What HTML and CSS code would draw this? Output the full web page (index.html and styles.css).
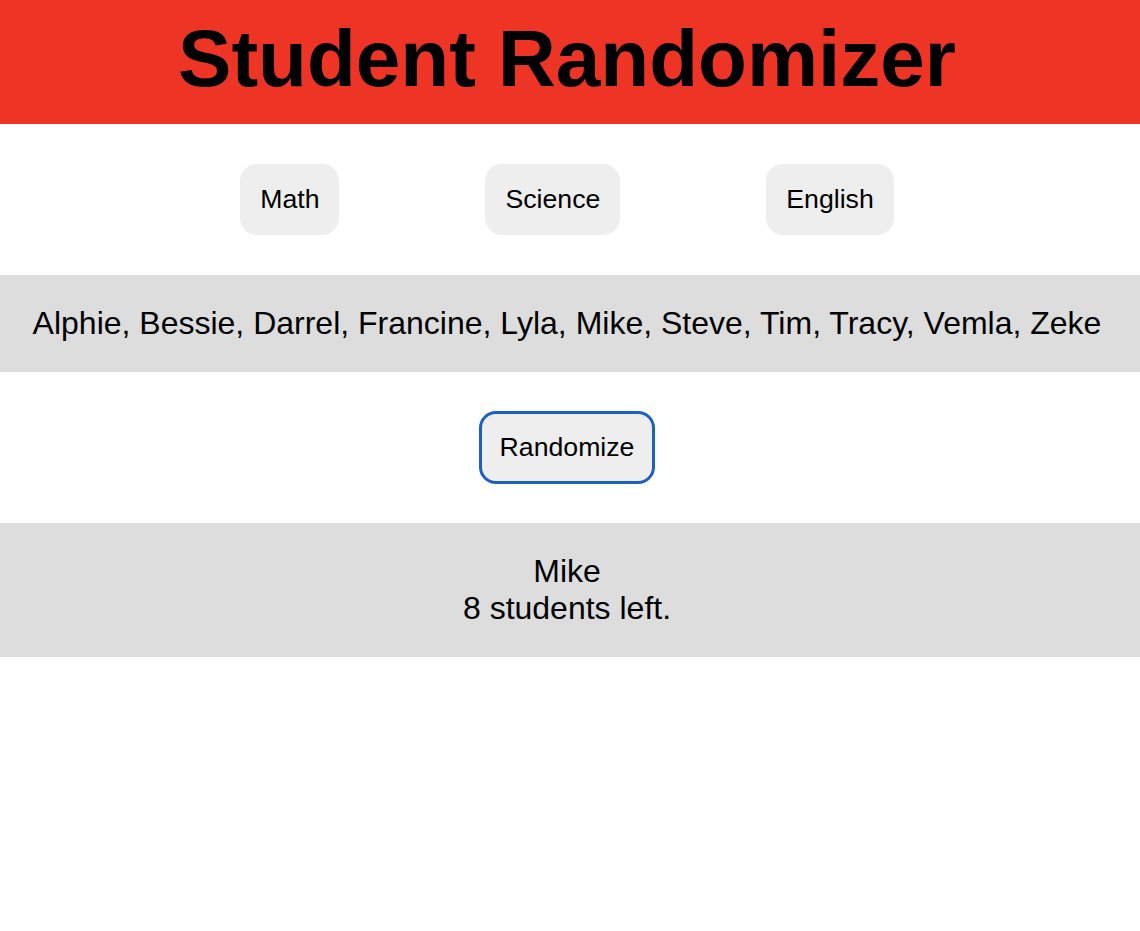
FILE: index.html
```html
<!DOCTYPE html>
<html>
<head>
<meta charset="utf-8">
<title>Student Randomizer</title>
<link rel="stylesheet" href="styles.css">
</head>
<body>
<header class="header">
  <h1 class="title">Student Randomizer</h1>
</header>
<nav class="classes">
  <button class="btn">Math</button>
  <button class="btn">Science</button>
  <button class="btn">English</button>
</nav>
<section class="bar names">Alphie, Bessie, Darrel, Francine, Lyla, Mike, Steve, Tim, Tracy, Vemla, Zeke</section>
<div class="action">
  <button class="btn btn-focus">Randomize</button>
</div>
<section class="bar result">
  <div>Mike</div>
  <div>8 students left.</div>
</section>
</body>
</html>
```

FILE: styles.css
```css
* { box-sizing: border-box; }
body {
  margin: 0;
  font-family: "Liberation Sans", Arial, sans-serif;
  color: #000;
  background: #fff;
}
.header {
  background: #ee3424;
  height: 124px;
  display: flex;
  align-items: center;
  justify-content: center;
  padding-right: 6px;
}
.title {
  margin: 0;
  font-size: 80px;
  font-weight: bold;
  line-height: 92px;
  padding-bottom: 6px;
}
.classes {
  display: flex;
  justify-content: center;
  gap: 146px;
  padding: 40px 6px 40px 0;
}
.btn {
  font-family: "Liberation Sans", Arial, sans-serif;
  font-size: 26.67px;
  line-height: 31px;
  padding: 20px;
  background: #eeeeee;
  border: none;
  border-radius: 17px;
  color: #000;
}
.btn-focus {
  border: 3px solid #1c60c4;
  padding: 18px 17.5px;
}
.bar {
  background: #dddddd;
  text-align: center;
  font-size: 32px;
  line-height: 37px;
  padding: 30px 6px 30px 0;
}
.action {
  display: flex;
  justify-content: center;
  padding: 39px 6px 39px 0;
}
```
